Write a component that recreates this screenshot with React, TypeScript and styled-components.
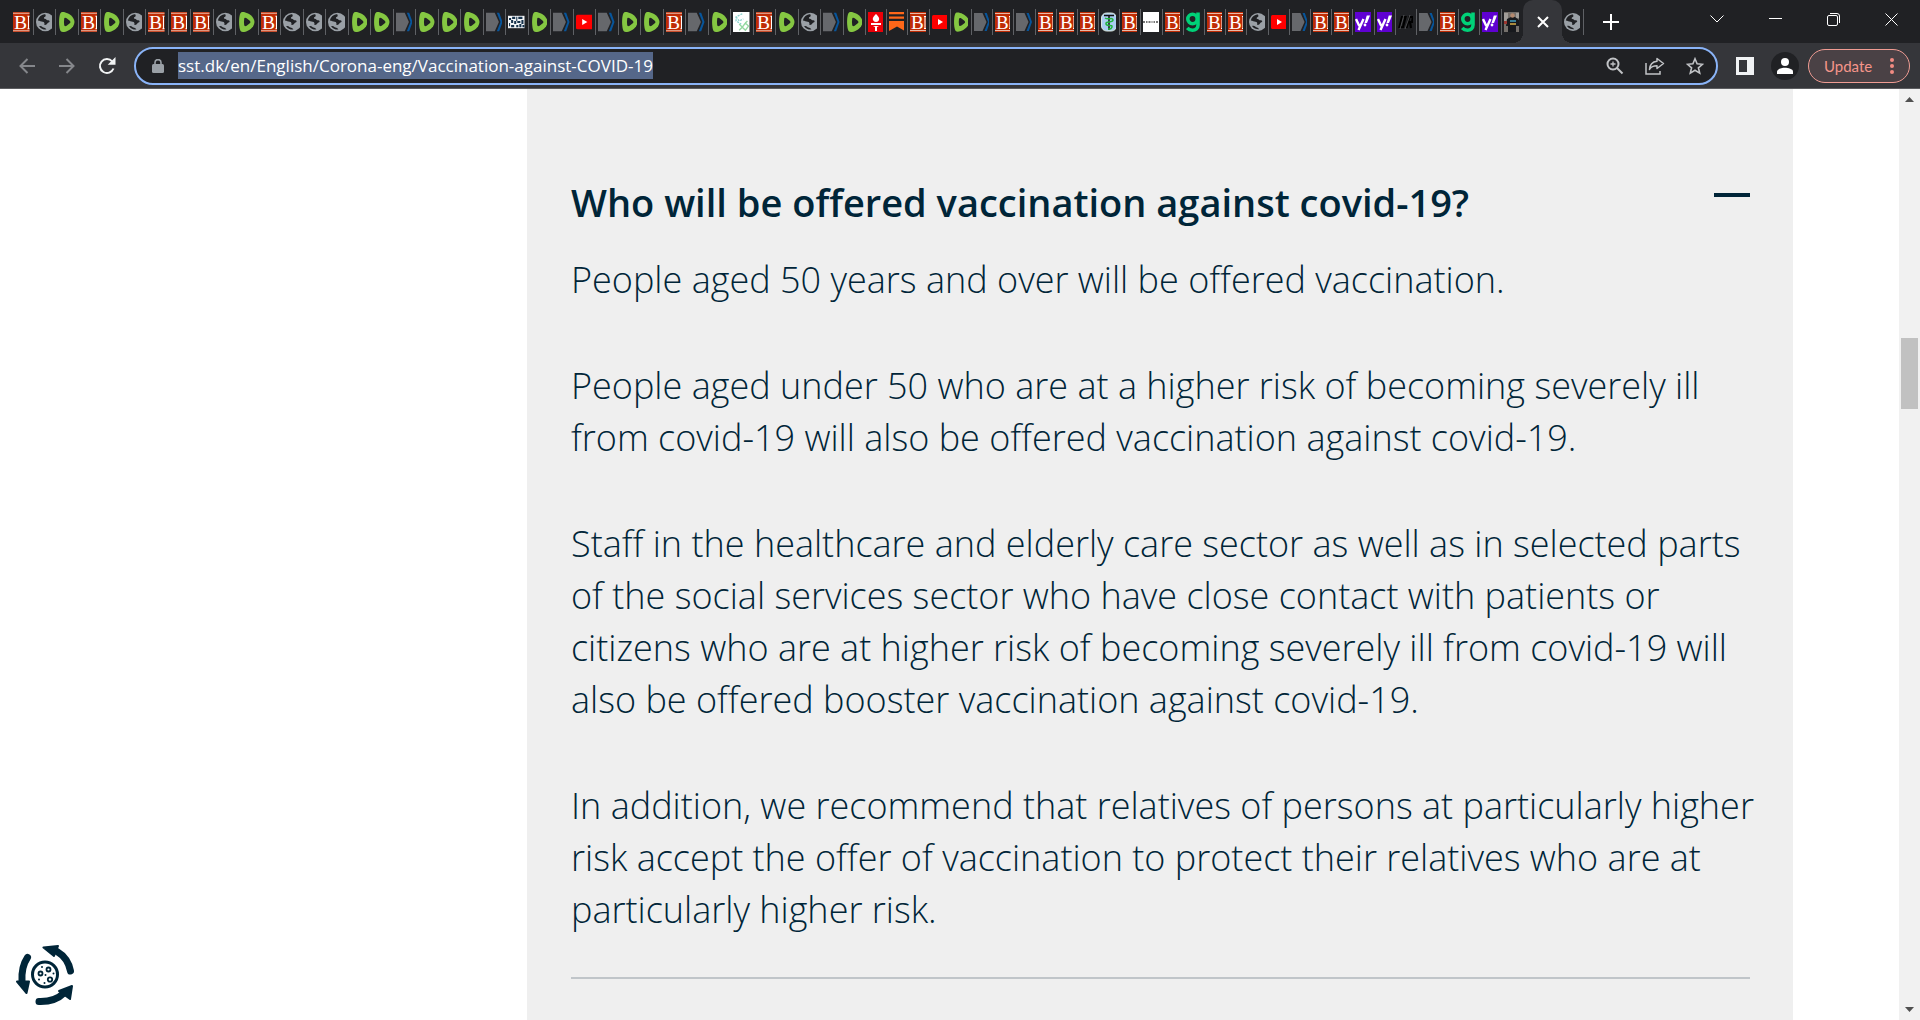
import React from "react";
import styled, { createGlobalStyle } from "styled-components";

const ink = "#002538";
const frame = "#202124";
const bar = "#35363a";

const GlobalStyle = createGlobalStyle`
  * { box-sizing: border-box; }
  body {
    margin: 0;
    overflow: hidden;
    background: #fff;
    font-family: "Open Sans", "Liberation Sans", sans-serif;
  }
  button { margin: 0; padding: 0; border: 0; background: none; color: inherit; font: inherit; }
  h2, p { margin: 0; }
`;

const Window = styled.div`
  display: flex;
  flex-direction: column;
  height: 100vh;
`;

/* ---------- tab strip ---------- */

const TabStrip = styled.div`
  display: flex;
  height: 43px;
  padding-left: 11px;
  background: ${frame};
`;

const TabGroup = styled.div<{ $width: number }>`
  display: flex;
  flex: 0 1 ${(p) => p.$width}px;
  min-width: 0;
`;

const Tab = styled.button<{ $last?: boolean }>`
  display: flex;
  flex: 1 1 0;
  align-items: center;
  min-width: 0;
  height: 26px;
  margin-top: 9px;
  padding: 0 3px 0 2px;
  border-right: 1px solid ${(p) => (p.$last ? "transparent" : "#5f6165")};
`;

const Favicon = styled.svg`
  display: block;
  width: 100%;
  height: 20px;
`;

const ActiveTab = styled.button`
  position: relative;
  display: flex;
  flex: 0 0 39px;
  align-items: center;
  justify-content: center;
  border-radius: 10px 10px 0 0;
  background: ${bar};
  &::before,
  &::after {
    content: "";
    position: absolute;
    bottom: 0;
    width: 10px;
    height: 10px;
  }
  &::before {
    right: 100%;
    background: radial-gradient(circle at 0 0, transparent 10px, ${bar} 10px);
  }
  &::after {
    left: 100%;
    background: radial-gradient(circle at 100% 0, transparent 10px, ${bar} 10px);
  }
`;

const NewTab = styled.button`
  display: flex;
  flex: 0 0 54px;
  align-items: center;
  justify-content: center;
`;

const WindowControls = styled.div`
  display: flex;
  height: 38px;
  margin-left: auto;
`;

const WindowButton = styled.button`
  display: flex;
  width: 58px;
  align-items: center;
  justify-content: center;
`;

/* ---------- toolbar ---------- */

const Toolbar = styled.div`
  display: flex;
  align-items: center;
  height: 46px;
  padding: 0 10px 0 7px;
  border-bottom: 1px solid #5c5d60;
  background: ${bar};
`;

const ToolButton = styled.button`
  display: flex;
  flex: 0 0 40px;
  height: 36px;
  align-items: center;
  justify-content: center;
`;

const Omnibox = styled.div`
  display: flex;
  flex: 1;
  align-items: center;
  height: 38px;
  margin: 0 7px;
  padding: 0 1px 0 2px;
  border: 2px solid #8ab4f8;
  border-radius: 19px;
  background: ${frame};
`;

const UrlSlot = styled.div`
  display: flex;
  flex: 1;
  min-width: 0;
`;

const UrlInput = styled.input`
  field-sizing: content;
  max-width: 100%;
  height: 27px;
  padding: 0;
  border: 0;
  outline: 0;
  background: #556789;
  color: #fff;
  font: 17px/27px "Open Sans", "Liberation Sans", sans-serif;
`;

const Avatar = styled.span`
  display: flex;
  width: 28px;
  height: 28px;
  align-items: center;
  justify-content: center;
  border-radius: 50%;
  background: ${frame};
`;

const UpdateButton = styled.button`
  display: flex;
  width: 102px;
  height: 34px;
  align-items: center;
  justify-content: space-between;
  margin-left: 3px;
  padding: 0 15px;
  border: 1px solid #f09c93;
  border-radius: 17px;
  background: #4a4145;
  color: #f5958a;
  font: 15px/20px Lato, "Liberation Sans", sans-serif;
`;

/* ---------- page ---------- */

const Viewport = styled.div`
  display: grid;
  flex: 1;
  min-height: 0;
  grid-template-columns: 527px minmax(0, 1fr) 106px 21px;
`;

const Panel = styled.main`
  grid-column: 2;
  overflow: hidden;
  padding: 87px 43px 0 44px;
  background: #efefef;
  color: ${ink};
`;

const Question = styled.h2`
  font-size: 38px;
  font-weight: 600;
  line-height: 52px;
`;

const Toggle = styled.button`
  display: flex;
  width: 100%;
  align-items: flex-start;
  justify-content: space-between;
  text-align: left;
`;

const Minus = styled.span`
  width: 36px;
  height: 4px;
  margin-top: 17px;
  background: ${ink};
`;

const Answer = styled.div`
  display: flex;
  flex-direction: column;
  gap: 54px;
  margin-top: 26px;
  padding-bottom: 41px;
  border-bottom: 2px solid #c0c5c9;
  font-size: 36px;
  font-weight: 300;
  line-height: 52px;
  white-space: nowrap;
`;

const ScrollTrack = styled.div`
  display: flex;
  grid-column: 4;
  flex-direction: column;
  align-items: center;
  background: #f1f1f1;
`;

const ScrollArrow = styled.button`
  display: flex;
  width: 21px;
  height: 21px;
  align-items: center;
  justify-content: center;
`;

const ScrollBody = styled.div`
  display: flex;
  flex: 1;
  flex-direction: column;
`;

const ScrollSpace = styled.div<{ $grow: number }>`
  flex: ${(p) => p.$grow} 1 0;
`;

const ScrollThumb = styled.div`
  width: 17px;
  height: 71px;
  background: #c1c1c1;
`;

const CookieButton = styled.button`
  position: fixed;
  bottom: 13px;
  left: 15px;
  width: 62px;
  height: 62px;
`;

/* ---------- favicons ---------- */

type Kind =
  | "B" | "G" | "R" | "A" | "chart" | "YT" | "mol" | "torch" | "sub"
  | "cad" | "ban" | "g" | "Y" | "OR" | "photo";

const names: Record<Kind, string> = {
  B: "Breitbart", G: "Web page", R: "Rumble", A: "Article", chart: "Chart", YT: "YouTube",
  mol: "Molecule", torch: "Torch", sub: "Substack", cad: "Medical", ban: "Banner",
  g: "Gab", Y: "Yahoo", OR: "OR", photo: "Photo",
};

const art: Record<Kind, React.ReactNode> = {
  B: (
    <>
      <path fill="#bf2c05" d="M0 0h16v20H0z" />
      <path fill="#e9b9a8" d="M0 1h16v1H0zM0 18h16v1H0z" />
      <text x="1" y="17" fill="#fff" fontFamily="Liberation Serif, serif" fontSize="19">B</text>
      <path fill="#fff" d="M14 4h2v1h-.5v11h.5v1h-2v-1h.5V5H14z" />
    </>
  ),
  G: (
    <>
      <circle cx="9" cy="10" r="9" fill="#9aa0a6" />
      <path fill={frame} d="M8 2.600c-3 .5-5.600 2.800-6.200 6 1.800.4 3.300 1 4.600 1.100 1.900.1 2.100 1.800 1.700 3.100 1.300.3 2.400-.2 2.900-1.300.3-1 1.900-.8 2.200-1.900.3-1-1-1.300-2.100-1.300-.9-.1-1.300-1.500-2.700-1.400-1-.1-.9-1.500 0-1.700 1.300-.3 1.200-1.200.6-2.600zM3 14c1.600 2.300 4.200 3.500 7 3.300-.2-1.500-1.600-1.500-2.800-2C6 15 5.800 13.400 3 14z" />
    </>
  ),
  R: (
    <>
      <path fill="#85c742" d="M3 .8C5-.6 11.500 1.600 14.700 6c1.700 2.500 1.700 5.500 0 8C11.700 18.400 5 20.700 3 19.200.4 17.200.4 2.800 3 .8z" />
      <path fill={frame} d="M6 7c.2-1.300 1.300-1.300 2.400-.6l3 2.300c.9.8.9 1.800 0 2.600l-3 2.300c-1.100.7-2.200.7-2.400-.6-.3-2-.3-4 0-6z" />
    </>
  ),
  A: (
    <>
      <path fill="#66686c" d="M0 1h8.500l4 9-4 9H0z" />
      <path fill="#07559b" d="M10.500 1h2.300L16 10l-3.200 9h-2.300l3.500-9z" />
    </>
  ),
  chart: (
    <>
      <path fill="#f2f5f7" d="M0 4h16v12H0z" />
      <path fill="#16324c" d="M1 6h2v2H1zM4 5h3v2H4zM8 5h1v4H8zM10 5h4v2h-4zM3 8h2v3H3zM6 9h2v3H6zM1 11h1v3H1zM3 13h3v2H3zM9 9h3v2H9zM13 8h2v4h-2zM8 13h2v2H8zM11 12h2v3h-2zM14 13h2v2h-2z" />
    </>
  ),
  YT: (
    <>
      <rect y="3" width="18" height="14" rx="1.500" fill="#f00" />
      <path fill="#fff" d="M6 7l5 3-5 3z" />
    </>
  ),
  mol: (
    <>
      <path fill="#fff" d="M0 0h16v20H0z" />
      <path fill="none" stroke="#8dd3cf" strokeWidth="1.300" strokeDasharray="2 1" d="M9 2L3 5v4l5 3M3 5l3 4 4-2" />
      <path fill="none" stroke="#93d8a0" strokeWidth="1.300" d="M6 12l3 3 3-4 3 3-3 4-3-3-3 3M12 11l2-2" />
    </>
  ),
  torch: (
    <>
      <path fill="#ed0008" d="M0 0h16v20H0z" />
      <path fill="#fff" d="M8 2c3 3 3.500 4 3 6-.5 1-1.500 2-3 2s-2.500-1-3-2c-.5-2 0-3 3-6zM3 11h10v2H3zM5 14h6l-2 1v4H7v-4z" />
    </>
  ),
  sub: <path fill="#ff6719" d="M0 0h16v2.300H0zM0 4.500h16v2.300H0zM0 9h16v10l-8-4.500L0 19z" />,
  cad: (
    <>
      <rect x=".5" y="1" width="15" height="18" rx="5" fill="#a9cdf2" stroke="#dbe7dc" />
      <path stroke="#111" strokeWidth="1.500" d="M3 3.500h10M8 3v15" />
      <path fill="none" stroke="#20b53c" strokeWidth="1.500" d="M4 6c3 2 8-1 8 2S4 9 5 12s7 0 6 3-3 2-4 2" />
    </>
  ),
  ban: (
    <>
      <path fill="#fff" d="M0 0h16v20H0z" />
      <path fill="#777" d="M0 9h2v2H0zM3 9h1.500v2H3zM5.500 9h2v2h-2zM8.500 9h1v2h-1zM10.500 9h1.500v2h-1.500zM13 9h2v2h-2z" />
    </>
  ),
  g: (
    <g fill="none" stroke="#00d178" strokeWidth="3.600">
      <circle cx="6.500" cy="7" r="4.700" />
      <path d="M12 .5V13c0 3.500-2.500 5.200-5.500 5.200-2.200 0-4-.7-5.300-2.200" />
    </g>
  ),
  Y: (
    <>
      <path fill="#5f01d1" d="M0 0h16v20H0z" />
      <path fill="none" stroke="#fff" strokeWidth="2.400" d="M1 7l3.300 7M8.500 7L3.500 18" />
      <path fill="#fff" d="M11.800 3.500h3.200l-3 7.500H9.500z" />
      <circle cx="10" cy="13" r="1.400" fill="#fff" />
    </>
  ),
  OR: (
    <g fill="none" stroke="#000" strokeWidth="2.200">
      <path d="M4 5L1.500 15H5L7.500 5z" />
      <path d="M8.500 16l3-11H15l-1 5h-3.500M12 10l1 6" />
      <path stroke="#6a6b6e" strokeWidth=".7" d="M2 17L6 3M7 17l5-14" />
    </g>
  ),
  photo: (
    <>
      <path fill="#75706b" d="M0 0h16v20H0z" />
      <path fill="#a19d99" d="M0 1h4v8H0zM12 1h4v5h-4z" />
      <path fill="#17191d" d="M3 7l4-2h4l4 3v6h-3v6H4v-6H2z" />
      <circle cx="8.500" cy="3.500" r="2.200" fill="#b5896e" />
      <path fill="#397f98" d="M6 8h6v2H6z" />
      <path fill="#a88a3d" d="M6 11h6v2H6z" />
      <path fill="#9c3630" d="M0 9h3v3H0z" />
    </>
  ),
};

const wideTabs = "B G R B R G B B B G R B G G G R R A R R R A chart R A YT A R R B A R mol B R G A R".split(" ") as Kind[];
const narrowTabs = "torch sub B YT R A B A B B B cad B ban B g B B G YT A B B Y Y OR A B g Y photo".split(" ") as Kind[];

function FaviconTab({ kind, last }: { kind: Kind; last?: boolean }) {
  return (
    <Tab type="button" aria-label={names[kind]} $last={last}>
      <Favicon viewBox="0 0 16 20" preserveAspectRatio="xMinYMid slice" aria-hidden="true">
        {art[kind]}
      </Favicon>
    </Tab>
  );
}

/* ---------- line icons ---------- */

const Line = styled.svg<{ $color?: string; $weight?: number }>`
  display: block;
  fill: none;
  stroke: ${(p) => p.$color || "#fff"};
  stroke-width: ${(p) => p.$weight || 1};
`;

function BrowserTabs() {
  return (
    <TabStrip>
      <TabGroup $width={855}>
        {wideTabs.map((kind, i) => <FaviconTab key={i} kind={kind} />)}
      </TabGroup>
      <TabGroup $width={657}>
        {narrowTabs.map((kind, i) => <FaviconTab key={i} kind={kind} last={i === narrowTabs.length - 1} />)}
      </TabGroup>
      <ActiveTab type="button" aria-label="Close tab">
        <Line width="12" height="12" $weight={2}><path d="M1 1l10 10M11 1L1 11" /></Line>
      </ActiveTab>
      <TabGroup $width={22}>
        <FaviconTab kind="G" />
      </TabGroup>
      <NewTab type="button" aria-label="New tab">
        <Line width="16" height="16" $weight={2}><path d="M8 0v16M0 8h16" /></Line>
      </NewTab>
      <WindowControls>
        <WindowButton type="button" aria-label="Search tabs">
          <Line width="14" height="8"><path d="M.5.5L7 7 13.500.5" /></Line>
        </WindowButton>
        <WindowButton type="button" aria-label="Minimize">
          <Line width="13" height="2"><path d="M0 .5h13" /></Line>
        </WindowButton>
        <WindowButton type="button" aria-label="Restore">
          <Line width="13" height="13">
            <rect x=".5" y="2.500" width="10" height="10" rx="1.500" />
            <path d="M3 .5h7a2.500 2.500 0 0 1 2.500 2.500v7" />
          </Line>
        </WindowButton>
        <WindowButton type="button" aria-label="Close">
          <Line width="13" height="13"><path d="M.5.5l12 12M12.500.5l-12 12" /></Line>
        </WindowButton>
      </WindowControls>
    </TabStrip>
  );
}

function BrowserToolbar() {
  return (
    <Toolbar>
      <ToolButton type="button" aria-label="Back">
        <Line width="16" height="16" $color="#85878b" $weight={2}><path d="M16 8H1.500M8.500 1l-7 7 7 7" /></Line>
      </ToolButton>
      <ToolButton type="button" aria-label="Forward">
        <Line width="16" height="16" $color="#85878b" $weight={2}><path d="M0 8h14.500M7.500 1l7 7-7 7" /></Line>
      </ToolButton>
      <ToolButton type="button" aria-label="Reload">
        <Line width="18" height="18" $color="#f1f3f4" $weight={2}>
          <path d="M15.500 11.500A7 7 0 1 1 14.200 4.300" />
          <path fill="#f1f3f4" stroke="none" d="M17.500 0v7.800H9.700z" />
        </Line>
      </ToolButton>
      <Omnibox>
        <ToolButton type="button" aria-label="Site information">
          <svg width="12" height="14" viewBox="0 0 12 14">
            <rect x="0" y="5" width="12" height="9" rx="1.500" fill="#9aa0a6" />
            <path d="M3 6V3.600a3 3 0 0 1 6 0V6" fill="none" stroke="#9aa0a6" strokeWidth="1.600" />
          </svg>
        </ToolButton>
        <UrlSlot>
          <UrlInput
            aria-label="Address and search bar"
            spellCheck={false}
            defaultValue="sst.dk/en/English/Corona-eng/Vaccination-against-COVID-19"
          />
        </UrlSlot>
        <ToolButton type="button" aria-label="Zoom">
          <Line width="18" height="18" $color="#c1c3c6" $weight={2}>
            <circle cx="7" cy="7" r="5.500" />
            <path d="M11 11l5.500 5.500" />
            <path strokeWidth="1.300" d="M4.500 7h5M7 4.500v5" />
          </Line>
        </ToolButton>
        <ToolButton type="button" aria-label="Share">
          <Line width="20" height="18" $color="#c1c3c6" $weight={1.5}>
            <path d="M1 6v11h14v-3" />
            <path strokeLinejoin="round" d="M12 1.500l6.500 5-6.500 5V8.800c-3.500 0-6 1-7.500 3.700.3-4.500 3-7.700 7.500-8.200z" />
          </Line>
        </ToolButton>
        <ToolButton type="button" aria-label="Bookmark this tab">
          <Line width="18" height="18" viewBox="0 0 18 18" $color="#c1c3c6" $weight={1.6}>
            <path d="M9 1.800l2.100 5 5.400.5-4.100 3.500 1.300 5.300L9 13.300l-4.700 2.800 1.300-5.300-4.100-3.500 5.400-.5z" />
          </Line>
        </ToolButton>
      </Omnibox>
      <ToolButton type="button" aria-label="Side panel">
        <svg width="18" height="18">
          <path fill="#f1f3f4" d="M0 0h18v18H0z" />
          <path fill={bar} d="M3 3h8v12H3z" />
        </svg>
      </ToolButton>
      <ToolButton type="button" aria-label="Profile">
        <Avatar>
          <svg width="16" height="16">
            <circle cx="8" cy="4" r="4" fill="#fff" />
            <path fill="#fff" d="M0 16v-2.500C0 11 5 9.800 8 9.800s8 1.200 8 3.700V16z" />
          </svg>
        </Avatar>
      </ToolButton>
      <UpdateButton type="button">
        Update
        <svg width="4" height="16" fill="#f28b82" aria-hidden="true">
          <circle cx="2" cy="2" r="2" /><circle cx="2" cy="8" r="2" /><circle cx="2" cy="14" r="2" />
        </svg>
      </UpdateButton>
    </Toolbar>
  );
}

const answer = [
  ["People aged 50 years and over will be offered vaccination."],
  [
    "People aged under 50 who are at a higher risk of becoming severely ill",
    "from covid-19 will also be offered vaccination against covid-19.",
  ],
  [
    "Staff in the healthcare and elderly care sector as well as in selected parts",
    "of the social services sector who have close contact with patients or",
    "citizens who are at higher risk of becoming severely ill from covid-19 will",
    "also be offered booster vaccination against covid-19.",
  ],
  [
    "In addition, we recommend that relatives of persons at particularly higher",
    "risk accept the offer of vaccination to protect their relatives who are at",
    "particularly higher risk.",
  ],
];

export default function App() {
  return (
    <Window>
      <GlobalStyle />
      <BrowserTabs />
      <BrowserToolbar />
      <Viewport>
        <Panel>
          <Question>
            <Toggle type="button" aria-expanded="true">
              Who will be offered vaccination against covid-19?
              <Minus />
            </Toggle>
          </Question>
          <Answer>
            {answer.map((lines, i) => (
              <p key={i}>
                {lines.map((line, n) => (
                  <React.Fragment key={n}>
                    {n > 0 && <br />}
                    {line}
                  </React.Fragment>
                ))}
              </p>
            ))}
          </Answer>
        </Panel>
        <ScrollTrack>
          <ScrollArrow type="button" aria-label="Scroll up">
            <svg width="9" height="5"><path fill="#505050" d="M0 5l4.500-5L9 5z" /></svg>
          </ScrollArrow>
          <ScrollBody>
            <ScrollSpace $grow={228} />
            <ScrollThumb />
            <ScrollSpace $grow={590} />
          </ScrollBody>
          <ScrollArrow type="button" aria-label="Scroll down">
            <svg width="9" height="5"><path fill="#505050" d="M0 0h9L4.500 5z" /></svg>
          </ScrollArrow>
        </ScrollTrack>
      </Viewport>
      <CookieButton type="button" aria-label="Cookie settings">
        <svg width="62" height="62" viewBox="0 0 62 62" fill="none" stroke={ink}>
          <g strokeWidth="7" strokeLinecap="round">
            <path d="M42 6.500Q53 13 55.500 26" />
            <path d="M12.500 12.500Q6 22 7 37" />
            <path d="M24 56.500Q40 57 49 48" />
          </g>
          <g fill={ink} strokeWidth="2" strokeLinejoin="round">
            <path d="M28.500 2.500L43 1l-4 10z" />
            <path d="M2 36.500h12L11.500 48z" />
            <path d="M44 46l13-5-2 13z" />
          </g>
          <circle cx="30" cy="29.500" r="12.500" strokeWidth="3" />
          <g strokeWidth="1.800">
            <circle cx="25.500" cy="28.500" r="2" />
            <circle cx="33.500" cy="24.500" r="2" />
            <circle cx="35" cy="34.500" r="2.200" />
          </g>
          <g fill={ink} stroke="none">
            <circle cx="27" cy="22" r="1" />
            <circle cx="30.500" cy="30" r="1" />
            <circle cx="38.500" cy="28.500" r="1" />
            <circle cx="24" cy="34.500" r="1" />
            <circle cx="29.500" cy="38" r="1" />
          </g>
        </svg>
      </CookieButton>
    </Window>
  );
}
